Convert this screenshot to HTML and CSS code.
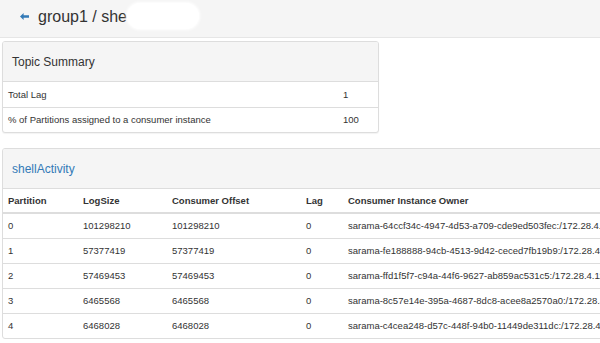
FILE: index.html
```html
<!DOCTYPE html>
<html lang="en">
<head>
    <meta charset="UTF-8">
    <meta name="viewport" content="width=device-width, initial-scale=1.0">
    <title>group1 / shellActivity</title>
    <link rel="stylesheet" href="styles.css">
</head>
<body>
    <div class="page-header">
        <a class="back-link" href="#">
            <svg width="9" height="7" viewBox="0 0 9 7">
                <path d="M0 3.5 L3.6 0 L3.6 2.3 L9 2.3 L9 4.7 L3.6 4.7 L3.6 7 Z" fill="#337ab7"/>
            </svg>
        </a>
        <h2 class="title">group1 / she<span class="masked"></span></h2>
    </div>

    <div class="content">
        <div class="panel panel-summary">
            <div class="panel-heading">Topic Summary</div>
            <table class="table summary-table">
                <colgroup>
                    <col>
                    <col class="col-value">
                </colgroup>
                <tbody>
                    <tr>
                        <td>Total Lag</td>
                        <td>1</td>
                    </tr>
                    <tr>
                        <td>% of Partitions assigned to a consumer instance</td>
                        <td>100</td>
                    </tr>
                </tbody>
            </table>
        </div>

        <div class="panel panel-topic">
            <div class="panel-heading"><a class="topic-link" href="#">shellActivity</a></div>
            <table class="table offsets-table">
                <colgroup>
                    <col class="col-partition">
                    <col class="col-logsize">
                    <col class="col-offset">
                    <col class="col-lag">
                    <col>
                </colgroup>
                <thead>
                    <tr>
                        <th>Partition</th>
                        <th>LogSize</th>
                        <th>Consumer Offset</th>
                        <th>Lag</th>
                        <th>Consumer Instance Owner</th>
                    </tr>
                </thead>
                <tbody id="rows"></tbody>
            </table>
        </div>
    </div>

    <script>
        const partitions = [
            { id: 0, logSize: 101298210, offset: 101298210, lag: 0, owner: "sarama-64ccf34c-4947-4d53-a709-cde9ed503fec:/172.28.4.12" },
            { id: 1, logSize: 57377419, offset: 57377419, lag: 0, owner: "sarama-fe188888-94cb-4513-9d42-ceced7fb19b9:/172.28.4.13" },
            { id: 2, logSize: 57469453, offset: 57469453, lag: 0, owner: "sarama-ffd1f5f7-c94a-44f6-9627-ab859ac531c5:/172.28.4.11" },
            { id: 3, logSize: 6465568, offset: 6465568, lag: 0, owner: "sarama-8c57e14e-395a-4687-8dc8-acee8a2570a0:/172.28.4.14" },
            { id: 4, logSize: 6468028, offset: 6468028, lag: 0, owner: "sarama-c4cea248-d57c-448f-94b0-11449de311dc:/172.28.4.12" }
        ];

        const tbody = document.getElementById('rows');
        partitions.forEach(p => {
            const tr = document.createElement('tr');
            tr.innerHTML = `
                <td>${p.id}</td>
                <td>${p.logSize}</td>
                <td>${p.offset}</td>
                <td>${p.lag}</td>
                <td>${p.owner}</td>
            `;
            tbody.appendChild(tr);
        });
    </script>
</body>
</html>
```

FILE: styles.css
```css
* {
    margin: 0;
    padding: 0;
    box-sizing: border-box;
}

body {
    font-family: "Liberation Sans", Arial, sans-serif;
    font-size: 9.5px;
    color: #333;
    background: #fff;
    overflow: hidden;
}

.page-header {
    height: 38px;
    background: #f5f5f5;
    border-bottom: 1px solid #e6e6e6;
    display: flex;
    align-items: center;
    padding-left: 20px;
}

.back-link {
    display: flex;
    margin-right: 9px;
    margin-bottom: 5px;
}

.title {
    font-size: 16px;
    font-weight: normal;
    color: #333;
    display: flex;
    align-items: center;
    margin-top: -3px;
}

.masked {
    display: inline-block;
    width: 72px;
    height: 26px;
    margin-top: -2px;
    background: #fff;
    border-radius: 13px;
    box-shadow: 0 0 3px 1px #fff;
}

.content {
    padding: 3px 0 0 2px;
}

.panel {
    border: 1px solid #ddd;
    border-radius: 3px;
    background: #fff;
    margin-bottom: 15px;
    overflow: hidden;
}

.panel-summary {
    width: 377px;
    box-shadow: 0 1px 1px rgba(0,0,0,0.05);
}

.panel-topic {
    width: 720px;
    border-radius: 3px 0 0 3px;
}

.panel-heading {
    height: 40px;
    background: #f5f5f5;
    border-bottom: 1px solid #ddd;
    display: flex;
    align-items: center;
    padding: 0 9px;
    font-size: 12px;
}

.topic-link {
    color: #337ab7;
    text-decoration: none;
}

.table {
    width: 100%;
    border-collapse: collapse;
    table-layout: fixed;
}

.table td,
.table th {
    height: 25px;
    padding: 0 5px;
    text-align: left;
    vertical-align: middle;
    white-space: nowrap;
    overflow: hidden;
    border-top: 1px solid #ddd;
}

.table tr:first-child td {
    border-top: none;
}

.table th {
    height: 24px;
    font-weight: bold;
    border-top: none;
    border-bottom: 2px solid #ddd;
}

.offsets-table tbody tr:first-child td {
    border-top: none;
}

.col-value {
    width: 40px;
}

.col-partition {
    width: 75px;
}

.col-logsize {
    width: 89px;
}

.col-offset {
    width: 134px;
}

.col-lag {
    width: 42px;
}
```
